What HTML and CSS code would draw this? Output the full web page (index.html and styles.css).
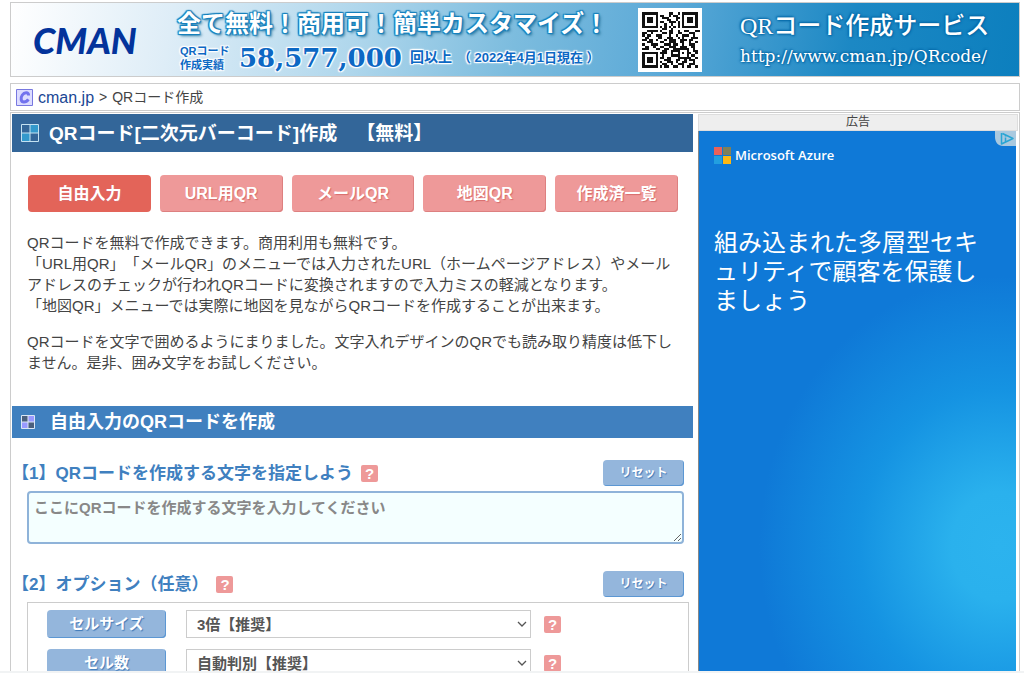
FILE: index.html
```html
<!DOCTYPE html>
<html lang="ja">
<head>
<meta charset="utf-8">
<meta name="viewport" content="width=device-width, initial-scale=1">
<title>QRコード作成</title>
<link rel="stylesheet" href="styles.css">
</head>
<body>
<div class="page">
  <header class="banner">
    <div class="brand">CMAN</div>
    <div class="promo">
      <p class="promo-title">全て無料！商用可！簡単カスタマイズ！</p>
      <div class="promo-count">
        <span class="count-label">QRコード<br>作成実績</span>
        <span class="count-number">58,577,000</span>
        <span class="count-unit">回以上</span>
        <span class="count-date">（ 2022年4月1日現在 ）</span>
      </div>
    </div>
    <svg class="qr" viewBox="-2 -2 29 29" shape-rendering="crispEdges" aria-label="QRコード" role="img">
      <path fill="#fff" d="M-2-2h29v29h-29z"/>
      <path fill="#111" fill-rule="evenodd" d="M0 0h7v7h-7zM1 1v5h5v-5zM2 2h3v3h-3zM18 0h7v7h-7zM19 1v5h5v-5zM20 2h3v3h-3zM0 18h7v7h-7zM1 19v5h5v-5zM2 20h3v3h-3z"/>
      <path stroke="#111" stroke-width="1" d="M12 .5h2m2 0h1M8 1.5h2m2 0h1m1 0h2M9 2.5h3m3 0h2M11 3.5h2m2 0h1M8 4.5h2m2 0h3m1 0h1M10 5.5h1m2 0h1m2 0h1M8 6.5h1m1 0h1m1 0h1m1 0h1m1 0h1M9 7.5h2m2 0h1M2 8.5h5m1 0h1m3 0h2m2 0h1m2 0h2m3 0h2M0 9.5h2m2 0h1m4 0h2m1 0h2m2 0h2m3 0h3M0 10.5h1m1 0h2m2 0h3m3 0h1m2 0h1m2 0h3m2 0h1M1 11.5h2m4 0h2m2 0h3m2 0h1m1 0h1m3 0h3M0 12.5h2m1 0h2m1 0h1m3 0h1m1 0h3m2 0h3m1 0h2M2 13.5h3m3 0h2m2 0h3m2 0h2m2 0h1m2 0h1M0 14.5h1m3 0h3m3 0h3m1 0h2m2 0h1m2 0h3M1 15.5h2m2 0h1m2 0h2m2 0h3m2 0h3m2 0h2M0 16.5h3m3 0h2m2 0h2m2 0h7m2 0h1M9 17.5h2m2 0h4m3 0h1m2 0h2M8 18.5h3m2 0h1m2 0h1m1 0h1m1 0h2m2 0h1M9 19.5h1m3 0h4m3 0h1m1 0h2M8 20.5h2m1 0h2m3 0h6m2 0h1M10 21.5h3m2 0h2m2 0h1m1 0h3M8 22.5h1m2 0h3m1 0h1m2 0h2m3 0h1M9 23.5h2m2 0h1m2 0h3m2 0h3M8 24.5h1m1 0h2m2 0h2m2 0h1m1 0h2m2 0h1"/>
    </svg>
    <div class="service">
      <p class="service-name">QRコード作成サービス</p>
      <p class="service-url">http://www.cman.jp/QRcode/</p>
    </div>
  </header>

  <nav class="crumbs">
    <svg class="crumb-icon" viewBox="0 0 17 17" aria-hidden="true">
      <path fill="#dcdcff" stroke="#7878e0" d="M.5.5h16v16H.5z"/>
      <path fill="none" stroke="#7272ee" stroke-width="3" d="M12.6 6.6C12.6 2.9 8.4 3 6.3 6c-2 3-1.5 7 1.6 7 2 0 3.400-1 4.500-2.600"/>
    </svg>
    <a href="#">cman.jp</a><span>&gt;</span><span>QRコード作成</span>
  </nav>

  <div class="columns">
    <main class="content">
      <h1 class="title">
        <svg class="title-icon" viewBox="0 0 18 18" aria-hidden="true">
          <path fill="#39c" d="M9 1h8v8H9zM1 9h8v8H1z"/>
          <path fill="none" stroke="#c4e2f2" d="M.5.5h17v17H.5zM9 .5v17M.5 9h17"/>
        </svg>
        <span>QRコード[二次元バーコード]作成　【無料】</span>
      </h1>

      <div class="tabs">
        <button class="tab tab-active" type="button">自由入力</button>
        <button class="tab" type="button">URL用QR</button>
        <button class="tab" type="button">メールQR</button>
        <button class="tab" type="button">地図QR</button>
        <button class="tab" type="button">作成済一覧</button>
      </div>

      <div class="intro">
        <p>QRコードを無料で作成できます。商用利用も無料です。<br>「URL用QR」「メールQR」のメニューでは入力されたURL（ホームページアドレス）やメールアドレスのチェックが行われQRコードに変換されますので入力ミスの軽減となります。<br>「地図QR」メニューでは実際に地図を見ながらQRコードを作成することが出来ます。</p>
        <p>QRコードを文字で囲めるようにまりました。文字入れデザインのQRでも読み取り精度は低下しません。是非、囲み文字をお試しください。</p>
      </div>

      <h2 class="subtitle">
        <svg class="subtitle-icon" viewBox="0 0 14 14" aria-hidden="true">
          <path fill="#4a5f7d" d="M1 1h6v6H1zM7 7h6v6H7z"/>
          <path fill="#99f" d="M7 1h6v6H7zM1 7h6v6H1z"/>
          <path fill="none" stroke="#dbe6f5" d="M.5.5h13v13H.5zM7 .5v13M.5 7h13"/>
        </svg>
        <span>自由入力のQRコードを作成</span>
      </h2>

      <section class="step">
        <div class="step-head">
          <label class="step-title" for="qr-text">【1】QRコードを作成する文字を指定しよう</label>
          <button class="help" type="button">?</button>
          <button class="reset" type="button">リセット</button>
        </div>
        <textarea class="qr-text" id="qr-text" placeholder="ここにQRコードを作成する文字を入力してください"></textarea>
      </section>

      <section class="step">
        <div class="step-head">
          <h3 class="step-title">【2】オプション（任意）</h3>
          <button class="help" type="button">?</button>
          <button class="reset" type="button">リセット</button>
        </div>
        <div class="options">
          <div class="option">
            <label class="option-name" for="cell-size">セルサイズ</label>
            <select class="option-value" id="cell-size"><option>3倍【推奨】</option></select>
            <button class="help" type="button">?</button>
          </div>
          <div class="option">
            <label class="option-name" for="cell-count">セル数</label>
            <select class="option-value" id="cell-count"><option>自動判別【推奨】</option></select>
            <button class="help" type="button">?</button>
          </div>
        </div>
      </section>
    </main>

    <aside class="side">
      <div class="side-head">広告</div>
      <div class="ad">
        <svg class="ad-choices" viewBox="0 0 21 15" aria-hidden="true">
          <path fill="#a9c9df" d="M0 0h21v15H8C3 15 0 11 0 6z"/>
          <path fill="none" stroke="#28a5d4" stroke-width="1.500" stroke-linejoin="round" d="M6.500 2v11L18 7.500 7.500 2.500M10.500 6.500v4M10.500 4.500v1"/>
        </svg>
        <div class="azure">
          <svg class="azure-logo" viewBox="0 0 17 17" aria-hidden="true">
            <path fill="#e9625a" d="M0 0h8v8H0z"/><path fill="#80805a" d="M9 0h8v8H9z"/>
            <path fill="#229fe0" d="M0 9h8v8H0z"/><path fill="#fdb813" d="M9 9h8v8H9z"/>
          </svg>
          <span>Microsoft Azure</span>
        </div>
        <p class="ad-copy">組み込まれた多層型セキュリティで顧客を保護しましょう</p>
      </div>
    </aside>
  </div>
</div>
</body>
</html>
```

FILE: styles.css
```css
* {
  box-sizing: border-box;
}

body {
  margin: 0;
  height: 100vh;
  overflow: hidden;
  background: #fff;
  color: #444;
  font-family: "Liberation Sans", "Noto Sans CJK JP", sans-serif;
  font-size: 15px;
  line-height: 21px;
  text-spacing-trim: space-all;
}

body::after {
  content: "";
  position: fixed;
  inset: auto 0 0;
  height: 2px;
  background: #f1f3f4;
}

p, h1, h2, h3 {
  margin: 0;
}

button, select, textarea {
  font-family: inherit;
}

button {
  cursor: pointer;
}

.page {
  margin: 2px 4px 0 10px;
}

/* Banner */
.banner {
  display: flex;
  align-items: center;
  height: 75px;
  padding-left: 22px;
  border: 1px solid #ccc;
  background: linear-gradient(100deg, #fff 0%, #deedf7 16%, #b0d7ec 34%, #7cbcde 50%, #5ba9d7 65%, #1c88c4 83%, #0c7fbe 100%);
}

.brand {
  width: 144px;
  color: #03339b;
  font: italic 900 36px/40px Lato, sans-serif;
}

.promo {
  width: 461px;
  white-space: nowrap;
}

.promo-title {
  color: #fff;
  font-size: 24px;
  font-weight: 700;
  line-height: 36px;
  text-shadow: 1px 1px 1px #1680bd, -1px 1px 1px #1680bd, 1px -1px 1px #1680bd, -1px -1px 1px #1680bd, 0 0 2px #1680bd, 2px 2px 3px #2f789e;
}

.promo-count {
  display: flex;
  align-items: center;
  height: 32px;
  color: #0c68c4;
  font-weight: 700;
  text-shadow: 1px 1px 1px #fff, -1px 1px 1px #fff, 1px -1px 1px #fff, -1px -1px 1px #fff, 0 0 3px #fff;
}

.count-label {
  width: 62px;
  padding-left: 3px;
  font-size: 11px;
  line-height: 14px;
}

.count-number {
  width: 171px;
  font: 700 26px/32px "DejaVu Serif", serif;
}

.count-unit {
  width: 48px;
  font-size: 14px;
}

.count-date {
  font-size: 13px;
}

.qr {
  flex: none;
  width: 64px;
  height: 64px;
}

.service {
  padding-left: 38px;
  color: #fff;
  white-space: nowrap;
  text-shadow: 1px 1px 2px #0569a8, -1px -1px 2px #0569a8, 0 0 3px #0569a8;
}

.service-name {
  font-family: "Liberation Serif", "Noto Sans CJK JP", serif;
  font-size: 24px;
  font-weight: 500;
  line-height: 32px;
}

.service-url {
  font-family: "DejaVu Serif", serif;
  font-size: 17px;
  line-height: 28px;
}

/* Breadcrumbs */
.crumbs {
  display: flex;
  align-items: center;
  gap: 5px;
  height: 28px;
  margin: 6px 0 1px;
  padding-left: 5px;
  border: 1px solid #ccc;
  font-size: 14px;
}

.crumb-icon {
  width: 17px;
  height: 17px;
}

.crumbs a {
  color: #1a4795;
  font-size: 16px;
  text-decoration: none;
}

/* Columns */
.columns {
  display: flex;
  gap: 5px;
  padding: 1px;
  border: 1px solid #ccc;
}

.content {
  flex: 1;
  min-width: 0;
}

.title {
  display: flex;
  align-items: center;
  gap: 10px;
  height: 38px;
  padding-left: 9px;
  background: #336699;
  color: #fff;
  font-size: 19px;
}

.title-icon {
  width: 18px;
  height: 18px;
}

.tabs {
  display: grid;
  grid-template-columns: repeat(5, 1fr);
  gap: 9px;
  padding: 23px 15px 20px 16px;
}

.tab {
  height: 37px;
  padding: 0 0 3px;
  border: 0;
  border-radius: 4px;
  background: #ee9999;
  box-shadow: inset -1px -1px 0 #dd8080;
  color: #fff;
  font-size: 16px;
  font-weight: 700;
  text-shadow: 1px 1px 1px #d86c6c;
}

.tab-active {
  background: #e36459;
  box-shadow: none;
}

.intro {
  display: grid;
  gap: 15px;
  padding: 0 9px 0 15px;
}

.subtitle {
  display: flex;
  align-items: center;
  gap: 15px;
  height: 32px;
  margin: 33px 0 22px;
  padding-left: 9px;
  background: #4080bf;
  color: #fff;
  font-size: 18px;
}

.subtitle-icon {
  width: 14px;
  height: 14px;
}

/* Steps */
.step {
  margin-bottom: 27px;
}

.step-head {
  display: flex;
  align-items: center;
  gap: 8px;
  padding-right: 9px;
}

.step-title {
  color: #4080bf;
  font-size: 17px;
  font-weight: 700;
}

.help {
  width: 17px;
  height: 17px;
  padding: 0;
  border: 0;
  border-radius: 2px;
  background: #ee9999;
  color: #fff;
  font-size: 15px;
  font-weight: 700;
  line-height: 17px;
}

.reset {
  width: 81px;
  height: 26px;
  margin-left: auto;
  padding: 0 0 3px;
  border: 0;
  border-radius: 4px;
  background: #94b6dc;
  box-shadow: inset -1px -1px 0 #5c97d3;
  color: #fff;
  font-size: 12px;
  font-weight: 700;
  text-shadow: 1px 1px 1px #3e79b8;
}

.qr-text {
  display: block;
  width: calc(100% - 24px);
  height: 53px;
  margin: 5px 9px 0 15px;
  padding: 3px 5px;
  border: 2px solid #8fb3d9;
  border-radius: 4px;
  background: #f4ffff;
  font-size: 15px;
  font-weight: 700;
  line-height: 24px;
}

.qr-text::placeholder {
  color: #888;
}

.options {
  display: grid;
  gap: 11px;
  margin: 5px 4px 0 15px;
  padding: 7px 0 7px 19px;
  border: 1px solid #ccc;
}

.option {
  display: flex;
  align-items: center;
}

.option-name {
  width: 119px;
  height: 28px;
  margin-right: 20px;
  border-radius: 4px;
  background: #94b6dc;
  box-shadow: inset -1px -1px 0 #5c97d3;
  color: #fff;
  font-weight: 700;
  line-height: 28px;
  text-align: center;
  text-shadow: 1px 1px 1px #3e79b8;
}

.option-value {
  appearance: none;
  width: 345px;
  height: 28px;
  margin-right: 13px;
  padding: 0 10px;
  border: 1px solid #ccc;
  border-radius: 0;
  background: #fff url("data:image/svg+xml,%3Csvg xmlns='http://www.w3.org/2000/svg' width='10' height='6'%3E%3Cpath d='M1 1l4 4 4-4' fill='none' stroke='%23555' stroke-width='1.300'/%3E%3C/svg%3E") no-repeat right 3px center;
  color: #555;
  font-size: 15px;
  font-weight: 700;
}

/* Sidebar */
.side {
  display: flex;
  flex-direction: column;
  width: 320px;
}

.side-head {
  height: 17px;
  border: 1px solid #ddd;
  background: #eee;
  font-size: 12px;
  line-height: 15px;
  text-align: center;
}

.ad {
  position: relative;
  flex: 1;
  margin-right: 2px;
  padding: 16px 32px 16px 15px;
  border-left: 1px solid #888;
  background: radial-gradient(ellipse 240px 270px at 300px 415px, #2cb3ee 0, #2ab1ed 20%, #1593e2 58%, #0f79d7 100%);
  color: #fff;
}

.ad-choices {
  position: absolute;
  top: 0;
  right: 0;
  width: 21px;
  height: 15px;
}

.azure {
  display: flex;
  align-items: center;
  gap: 4px;
  height: 17px;
  margin-bottom: 62px;
  font: 600 13px/17px "Open Sans", sans-serif;
}

.azure-logo {
  width: 17px;
  height: 17px;
}

.ad-copy {
  font-family: "Noto Sans CJK JP", sans-serif;
  font-size: 24px;
  line-height: 29px;
}
```
